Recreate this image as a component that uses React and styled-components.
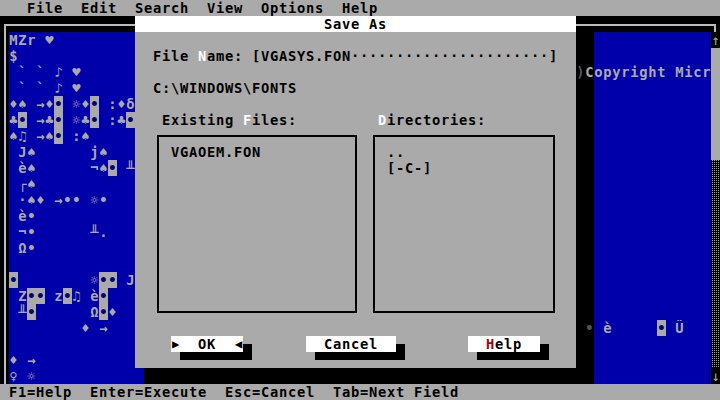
import { createGlobalStyle, styled } from "styled-components";

const C = {
  gray: "#aaaaaa",
  blue: "#0000aa",
  white: "#ffffff",
  black: "#000000",
  line: "#bcbcbc",
  dim: "#555555",
  red: "#aa0000",
  hole: "#00006a",
};

const GlobalStyle = createGlobalStyle`
  html, body {
    margin: 0;
    background: #000;
  }
  body {
    font-family: "DejaVu Sans Mono", "Liberation Mono", monospace;
    font-size: 13.75px;
    letter-spacing: 0.72px;
    font-weight: bold;
    line-height: 16px;
  }
`;

// editor text rows 2..23 as [column, text, kind]; "◘" is an inverse cell
const ROWS = [
  [[1, "MZr"], [5, "♥"]],
  [[1, "$"]],
  [[2, "`"], [4, "`"], [6, "♪"], [8, "♥"], [64, ")", "shade"], [65, "C", "lift"], [66, "opyright Micr"]],
  [[2, "`"], [4, "`"], [6, "♪"], [8, "♥"]],
  [[1, "♦♠"], [4, "→♦◘"], [8, "☼♦◘"], [12, ":♦δ"]],
  [[1, "♣◘"], [4, "→♣◘"], [8, "☼♣◘"], [12, ":♣◘"]],
  [[1, "♠♫"], [4, "→♠◘"], [8, ":♠"]],
  [[2, "J♠"], [10, "j♠"]],
  [[2, "è♠"], [10, "¬♠◘"], [14, "╨"]],
  [[2, "┌♠"]],
  [[2, "·♠♦"], [6, "→••"], [10, "☼•"]],
  [[2, "è•"]],
  [[2, "¬•"], [10, "╨."]],
  [[2, "Ω•"]],
  [],
  [[1, "◘"], [10, "☼◘◘"], [14, "J"]],
  [[2, "Z◘◘"], [6, "z◘♫"], [10, "è◘"]],
  [[2, "╨◘"], [10, "Ω◘♦"]],
  [[9, "♦"], [11, "→"], [65, "•", "shade"], [67, "è"], [73, "◘"], [75, "Ü"]],
  [],
  [[1, "♦"], [3, "→"]],
  [[1, "♀"], [3, "☼"]],
];

const MENU = ["File", "Edit", "Search", "View", "Options", "Help"];

const Screen = styled.div`
  width: 720px;
  height: 400px;
  display: grid;
  grid-template-rows: 16px 368px 16px;
  background: ${C.black};
  overflow: hidden;
`;

const MenuBar = styled.div`
  display: flex;
  gap: 18px;
  padding-left: 27px;
  background: ${C.gray};
  color: ${C.black};
`;

const Workspace = styled.div`
  position: relative;
`;

const Editor = styled.div`
  display: grid;
  grid-template-columns: 9px 702px 9px;
  grid-template-rows: 16px 352px;
  height: 100%;
`;

const FrameTop = styled.div`
  grid-column: 1 / 4;
  background: ${C.black};
  padding: 8px 4px 0 4px;
`;

const Corner = styled.div`
  height: 8px;
  border: 2px solid ${C.line};
  border-bottom: none;
  box-sizing: border-box;
`;

const FrameLeft = styled.div`
  background: linear-gradient(90deg, transparent 4px, ${C.line} 4px 6px, transparent 6px), ${C.black};
`;

const TextArea = styled.div`
  background: ${C.blue};
  color: ${C.gray};
`;

const Line = styled.div`
  display: grid;
  grid-template-columns: repeat(78, 9px);
  grid-template-rows: 16px;
  height: 16px;
`;

const Glyph = styled.span`
  grid-row: 1;
  height: 16px;
  overflow: hidden;
  text-align: center;
  letter-spacing: 0;
  white-space: pre;
  color: ${({ $kind }) => ($kind === "shade" ? C.dim : C.gray)};
  ${({ $kind }) => ($kind ? "position: relative; z-index: 2;" : "")}
`;

const Inv = styled.span`
  grid-row: 1;
  height: 16px;
  overflow: hidden;
  text-align: center;
  letter-spacing: 0;
  background: ${C.gray};
  color: ${C.hole};
`;

const ScrollBar = styled.div`
  display: flex;
  flex-direction: column;
  background: ${C.black};
`;

const Arrow = styled.div`
  height: 16px;
  color: ${C.gray};
  text-align: center;
  letter-spacing: 0;
  font-weight: normal;
`;

const Thumb = styled.div`
  height: 112px;
  background: ${C.gray};
`;

const Track = styled.div`
  flex: 1;
  background: conic-gradient(${C.gray} 0 25%, ${C.black} 0 100%) 0 0 / 2px 2px;
`;

const Dialog = styled.div`
  position: absolute;
  left: 135px;
  top: 0;
  width: 441px;
  height: 352px;
  display: flex;
  flex-direction: column;
  color: ${C.black};
  box-shadow: 18px 16px 0 ${C.black}, 9px 16px 0 ${C.black};
`;

const Title = styled.div`
  height: 16px;
  background: ${C.white};
  text-align: center;
`;

const Body = styled.div`
  flex: 1;
  display: flex;
  flex-direction: column;
  padding-top: 16px;
  background: ${C.gray};
`;

const TextRow = styled.div`
  height: 16px;
  padding-left: 18px;
  white-space: pre;
  margin-top: ${({ $space }) => ($space ? "16px" : "0")};
`;

const Hot = styled.span`
  color: ${({ $red }) => ($red ? C.red : C.white)};
`;

const Lists = styled.div`
  margin-top: 16px;
  display: grid;
  grid-template-columns: 200px 182px;
  column-gap: 16px;
  padding-left: 21.5px;
`;

const Group = styled.div`
  display: flex;
  flex-direction: column;
`;

const GroupLabel = styled.div`
  height: 16px;
  padding-left: 5.5px;
  white-space: pre;
`;

const ListBox = styled.div`
  margin-top: 7px;
  height: 178px;
  box-sizing: border-box;
  border: 2px solid ${C.black};
  padding: 7px 0 0 12.5px;
  white-space: pre;
`;

const Buttons = styled.div`
  margin-top: 23px;
  display: flex;
  padding-left: 36px;
`;

const Button = styled.div`
  width: ${({ $cols }) => $cols * 9}px;
  height: 16px;
  margin-left: ${({ $gap }) => $gap}px;
  background: ${C.white};
  white-space: pre;
  box-shadow: 9px 8px 0 ${C.black};
  display: flex;
  justify-content: space-between;
`;

const Label = styled.span`
  flex: 1;
  text-align: center;
`;

const Pointer = styled.span`
  width: 9px;
  display: flex;
  justify-content: center;
  letter-spacing: 0;
  font-size: 12px;
`;

const StatusBar = styled.div`
  padding-left: 9px;
  background: ${C.gray};
  color: ${C.black};
  white-space: pre;
`;

const renderRow = (segments, r) => (
  <Line key={r}>
    {segments.flatMap(([col, text, kind]) =>
      [...text].map((ch, i) => {
        if (ch === " ") return null;
        const at = { gridColumn: col + i };
        if (ch === "◘")
          return (
            <Inv key={col + i} style={at}>
              •
            </Inv>
          );
        return (
          <Glyph key={col + i} style={at} $kind={kind}>
            {ch}
          </Glyph>
        );
      })
    )}
  </Line>
);

const App = () => {
  return (
    <>
      <GlobalStyle />
      <Screen>
        <MenuBar>
          {MENU.map((m) => (
            <span key={m}>{m}</span>
          ))}
        </MenuBar>
        <Workspace>
          <Editor>
            <FrameTop>
              <Corner />
            </FrameTop>
            <FrameLeft />
            <TextArea>{ROWS.map(renderRow)}</TextArea>
            <ScrollBar>
              <Arrow>↑</Arrow>
              <Thumb />
              <Track />
              <Arrow>↓</Arrow>
            </ScrollBar>
          </Editor>
          <Dialog>
            <Title>Save As</Title>
            <Body>
              <TextRow>
                File <Hot>N</Hot>
                {"ame: [VGASYS.FON" + "·".repeat(22) + "]"}
              </TextRow>
              <TextRow $space>{"C:\\WINDOWS\\FONTS"}</TextRow>
              <Lists>
                <Group>
                  <GroupLabel>
                    Existing <Hot>F</Hot>iles:
                  </GroupLabel>
                  <ListBox>VGAOEM.FON</ListBox>
                </Group>
                <Group>
                  <GroupLabel>
                    <Hot>D</Hot>irectories:
                  </GroupLabel>
                  <ListBox>{"..\n[-C-]"}</ListBox>
                </Group>
              </Lists>
              <Buttons>
                <Button $cols={8} $gap={0}>
                  <Pointer>▶</Pointer>
                  <Label>OK</Label>
                  <Pointer>◀</Pointer>
                </Button>
                <Button $cols={10} $gap={63}>
                  <Label>Cancel</Label>
                </Button>
                <Button $cols={8} $gap={72}>
                  <Label>
                    <Hot $red>H</Hot>elp
                  </Label>
                </Button>
              </Buttons>
            </Body>
          </Dialog>
        </Workspace>
        <StatusBar>{"F1=Help  Enter=Execute  Esc=Cancel  Tab=Next Field"}</StatusBar>
      </Screen>
    </>
  );
};

export default App;
